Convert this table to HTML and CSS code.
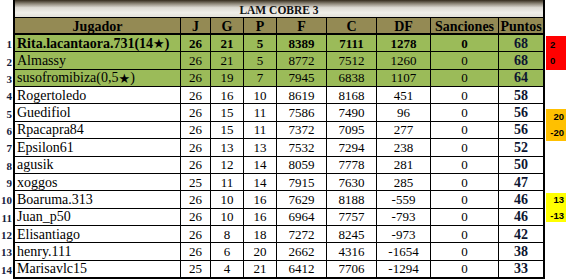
FILE: index.html
```html
<!DOCTYPE html>
<html lang="es">
<head>
<meta charset="utf-8">
<title>LAM COBRE 3</title>
<link rel="stylesheet" href="styles.css">
</head>
<body>
<div class="page">
  <div class="ranks">
    <div class="rsp"></div>
    <div>1</div><div>2</div><div>3</div><div>4</div><div>5</div><div>6</div><div>7</div>
    <div>8</div><div>9</div><div>10</div><div>11</div><div>12</div><div>13</div><div>14</div>
  </div>
  <div class="tbl">
    <div class="title">LAM COBRE 3</div>
    <div class="row hd">
      <div>Jugador</div><div>J</div><div>G</div><div>P</div><div>F</div><div>C</div><div>DF</div><div>Sanciones</div><div>Puntos</div>
    </div>
    <div class="row g b">
      <div class="name">Rita.lacantaora.731(14<span class="star">★</span>)</div><div>26</div><div>21</div><div>5</div><div>8389</div><div>7111</div><div>1278</div><div>0</div><div class="pts">68</div>
    </div>
    <div class="row g">
      <div class="name">Almassy</div><div>26</div><div>21</div><div>5</div><div>8772</div><div>7512</div><div>1260</div><div>0</div><div class="pts">68</div>
    </div>
    <div class="row g">
      <div class="name">susofromibiza(0,5<span class="star">★</span>)</div><div>26</div><div>19</div><div>7</div><div>7945</div><div>6838</div><div>1107</div><div>0</div><div class="pts">64</div>
    </div>
    <div class="row">
      <div class="name">Rogertoledo</div><div>26</div><div>16</div><div>10</div><div>8619</div><div>8168</div><div>451</div><div>0</div><div class="pts">58</div>
    </div>
    <div class="row">
      <div class="name">Guedifiol</div><div>26</div><div>15</div><div>11</div><div>7586</div><div>7490</div><div>96</div><div>0</div><div class="pts">56</div>
    </div>
    <div class="row">
      <div class="name">Rpacapra84</div><div>26</div><div>15</div><div>11</div><div>7372</div><div>7095</div><div>277</div><div>0</div><div class="pts">56</div>
    </div>
    <div class="row">
      <div class="name">Epsilon61</div><div>26</div><div>13</div><div>13</div><div>7532</div><div>7294</div><div>238</div><div>0</div><div class="pts">52</div>
    </div>
    <div class="row">
      <div class="name">agusik</div><div>26</div><div>12</div><div>14</div><div>8059</div><div>7778</div><div>281</div><div>0</div><div class="pts">50</div>
    </div>
    <div class="row">
      <div class="name">xoggos</div><div>25</div><div>11</div><div>14</div><div>7915</div><div>7630</div><div>285</div><div>0</div><div class="pts">47</div>
    </div>
    <div class="row">
      <div class="name">Boaruma.313</div><div>26</div><div>10</div><div>16</div><div>7629</div><div>8188</div><div>-559</div><div>0</div><div class="pts">46</div>
    </div>
    <div class="row">
      <div class="name">Juan_p50</div><div>26</div><div>10</div><div>16</div><div>6964</div><div>7757</div><div>-793</div><div>0</div><div class="pts">46</div>
    </div>
    <div class="row">
      <div class="name">Elisantiago</div><div>26</div><div>8</div><div>18</div><div>7272</div><div>8245</div><div>-973</div><div>0</div><div class="pts">42</div>
    </div>
    <div class="row">
      <div class="name">henry.111</div><div>26</div><div>6</div><div>20</div><div>2662</div><div>4316</div><div>-1654</div><div>0</div><div class="pts">38</div>
    </div>
    <div class="row">
      <div class="name">Marisavlc15</div><div>25</div><div>4</div><div>21</div><div>6412</div><div>7706</div><div>-1294</div><div>0</div><div class="pts">33</div>
    </div>
  </div>
  <div class="side">
    <div class="mark red"><span>2</span><span>0</span></div>
    <div class="mark orange"><span>20</span><span>-20</span></div>
    <div class="mark yellow"><span>13</span><span>-13</span></div>
  </div>
</div>
</body>
</html>
```
FILE: styles.css
```css
html, body {
  margin: 0;
  padding: 0;
  background: #fff;
}
body {
  width: 566px;
  height: 280px;
  overflow: hidden;
  font-family: "Liberation Serif", "DejaVu Serif", serif;
  color: #000;
}
.page {
  display: flex;
  height: 280px;
}
.ranks {
  width: 13px;
  height: 279px;
  box-sizing: border-box;
  padding-bottom: 2px;
  display: grid;
  grid-template-rows: 17px 16px repeat(14, 1fr);
  row-gap: 1px;
  font-weight: bold;
  font-size: 11px;
  color: #14213d;
}
.ranks > div {
  display: flex;
  align-items: center;
  justify-content: flex-end;
  padding-right: 1px;
  padding-top: 2px;
}
.ranks > .rsp {
  grid-row: span 2;
}
.tbl {
  width: 532px;
  height: 279px;
  box-sizing: border-box;
  padding: 0 2px 2px 2px;
  background: #000;
  display: grid;
  grid-template-columns: 165px 29px 32px 32px 49px 49px 53px 67px 44px;
  grid-template-rows: 17px 16px repeat(14, 1fr);
  gap: 1px;
}
.title {
  grid-column: 1 / -1;
  background: linear-gradient(#342b1c 0%, #8f887a 22%, #dedbd4 45%, #efeee9 75%, #e3e1da 100%);
  font-weight: bold;
  font-size: 11.5px;
  display: flex;
  align-items: center;
  justify-content: center;
  padding-top: 2px;
  color: #111;
}
.row {
  display: contents;
}
.row > div {
  background: #fff;
  display: flex;
  align-items: center;
  justify-content: center;
  font-size: 13px;
  padding-top: 1px;
  white-space: nowrap;
  overflow: hidden;
}
.row > .name {
  justify-content: flex-start;
  padding-left: 2px;
  font-size: 14px;
}
.row > .pts {
  font-weight: bold;
  font-size: 14px;
  color: #0d1530;
}
.row.hd > div {
  background: #948a54;
  font-weight: bold;
  font-size: 14px;
  margin-bottom: 1px;
  padding-top: 2px;
}
.row.g > div {
  background: #9bbb59;
}
.row.b > div {
  font-weight: bold;
}
.star {
  font-family: "DejaVu Sans", sans-serif;
  font-size: 13px;
}
.side {
  width: 20px;
  margin-left: 1px;
  padding-top: 36px;
  display: flex;
  flex-direction: column;
  font-family: "Liberation Sans", Arial, sans-serif;
  font-weight: bold;
  font-size: 9.5px;
}
.mark {
  display: flex;
  flex-direction: column;
  justify-content: center;
  line-height: 16px;
}
.red {
  background: #ff0000;
  height: 34px;
  text-align: left;
  padding-left: 4px;
}
.orange {
  background: #ffc000;
  height: 32px;
  margin-top: 39px;
  text-align: right;
  padding-right: 2px;
}
.yellow {
  background: #ffff00;
  height: 29px;
  margin-top: 52px;
  text-align: right;
  padding-right: 2px;
}
```
